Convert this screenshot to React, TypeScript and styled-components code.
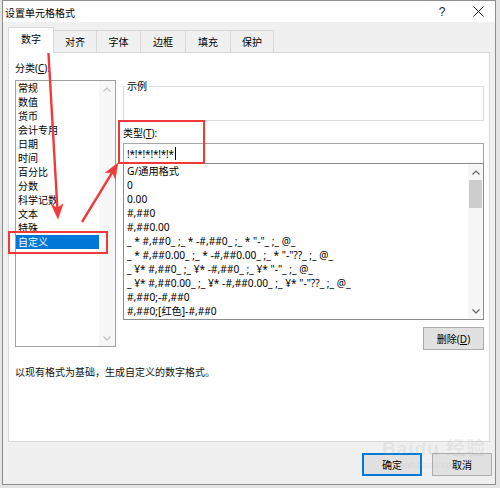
import styled, { createGlobalStyle } from "styled-components";

const GlobalStyle = createGlobalStyle`
  html, body {
    margin: 0;
    padding: 0;
  }
  body {
    width: 500px;
    height: 488px;
    overflow: hidden;
    background: #e4e4e4;
    font-family: "Noto Sans", "Noto Sans CJK SC", sans-serif;
    font-size: 10px;
    color: #000;
  }
`;

const Screen = styled.div`
  position: relative;
  width: 500px;
  height: 488px;
  padding-left: 2px;
  box-sizing: border-box;
`;

const Dialog = styled.div`
  width: 494px;
  height: 485px;
  box-sizing: border-box;
  border: 1px solid #8e8e8e;
  background: #f0f0f0;
  display: flex;
  flex-direction: column;
`;

const TitleBar = styled.div`
  height: 21px;
  background: #fff;
  display: flex;
  align-items: center;
  padding: 0 2px;
  gap: 6px;
`;

const Title = styled.span`
  flex: 1;
  padding-top: 2px;
  line-height: 14px;
`;

const TitleButton = styled.span`
  width: 30px;
  height: 21px;
  display: flex;
  align-items: center;
  justify-content: center;
  font-family: "Liberation Sans", sans-serif;
  font-size: 12px;
  color: #222;
`;

const Body = styled.div`
  flex: 1;
  display: flex;
  flex-direction: column;
  padding: 0 5px;
`;

const TabRow = styled.div`
  height: 30px;
  display: flex;
  align-items: flex-end;
`;

const Tab = styled.div<{ $active?: boolean; $w: number }>`
  position: relative;
  z-index: ${(p) => (p.$active ? 2 : 1)};
  width: ${(p) => p.$w}px;
  height: ${(p) => (p.$active ? 26 : 22)}px;
  margin-bottom: ${(p) => (p.$active ? -1 : 0)}px;
  margin-right: -1px;
  box-sizing: border-box;
  border: 1px solid #d9d9d9;
  border-bottom: none;
  background: ${(p) => (p.$active ? "#fff" : "#f0f0f0")};
  display: flex;
  align-items: center;
  justify-content: center;
  padding-bottom: ${(p) => (p.$active ? 4 : 0)}px;
  line-height: 14px;
`;

const Panel = styled.div`
  height: 390px;
  box-sizing: border-box;
  background: #fff;
  border: 1px solid #d9d9d9;
  padding: 8px 5px 0 6px;
  display: flex;
  flex-direction: column;
`;

const MainRow = styled.div`
  display: grid;
  grid-template-columns: 101px 1fr;
  column-gap: 7px;
  align-items: start;
`;

const Column = styled.div`
  display: flex;
  flex-direction: column;
`;

const Label = styled.div<{ $gap?: number; $top?: number }>`
  line-height: 14px;
  height: 14px;
  margin-top: ${(p) => p.$top ?? 0}px;
  margin-bottom: ${(p) => p.$gap ?? 0}px;
  white-space: nowrap;
`;

const Mnemonic = styled.span`
  text-decoration: underline;
  text-underline-offset: 1px;
`;

const ListBox = styled.div<{ $h: number; $border: string }>`
  height: ${(p) => p.$h}px;
  box-sizing: border-box;
  border: 1px solid ${(p) => p.$border};
  background: #fff;
  display: flex;
  overflow: hidden;
`;

const ListItems = styled.div<{ $pad: number; $size?: number }>`
  flex: 1;
  display: flex;
  flex-direction: column;
  padding-left: ${(p) => p.$pad}px;
  font-size: ${(p) => p.$size ?? 10}px;
`;

const Item = styled.div<{ $selected?: boolean }>`
  height: 14px;
  line-height: 14px;
  white-space: pre;
  margin-left: ${(p) => (p.$selected ? -2 : 0)}px;
  padding-left: ${(p) => (p.$selected ? 2 : 0)}px;
  background: ${(p) => (p.$selected ? "#0078d7" : "transparent")};
  color: ${(p) => (p.$selected ? "#fff" : "#000")};
`;

const ScrollBar = styled.div<{ $w: number }>`
  width: ${(p) => p.$w}px;
  background: #f7f7f7;
  display: flex;
  flex-direction: column;
  align-items: center;
`;

const ArrowBox = styled.div`
  height: 16px;
  width: 100%;
  display: flex;
  align-items: center;
  justify-content: center;
`;

const Track = styled.div`
  flex: 1;
  width: 100%;
  display: flex;
  flex-direction: column;
  align-items: center;
`;

const Thumb = styled.div`
  width: 13px;
  height: 28px;
  background: #cdcdcd;
`;

const SampleBox = styled.fieldset`
  margin: 18px 0 0;
  padding: 0;
  height: 42px;
  box-sizing: border-box;
  border: 1px solid #dcdcdc;
  min-width: 0;
`;

const Legend = styled.legend`
  padding: 0 2px;
  margin-left: 1px;
  line-height: 14px;
`;

const Input = styled.div`
  margin-top: 3px;
  height: 20px;
  box-sizing: border-box;
  border: 1px solid #a6a6a6;
  border-bottom: none;
  display: flex;
  align-items: center;
  padding-left: 3px;
  font-family: "Noto Sans", sans-serif;
  letter-spacing: -0.2px;
`;

const Caret = styled.span`
  display: inline-block;
  width: 1px;
  height: 13px;
  background: #000;
  margin-left: 1px;
`;

const Button = styled.div<{ $w: number; $focus?: boolean }>`
  width: ${(p) => p.$w}px;
  height: 23px;
  box-sizing: border-box;
  background: #e1e1e1;
  border: 1px solid ${(p) => (p.$focus ? "#0078d7" : "#adadad")};
  box-shadow: ${(p) => (p.$focus ? "inset 0 0 0 1px #0078d7" : "none")};
  display: flex;
  align-items: center;
  justify-content: center;
  line-height: 14px;
`;

const DeleteButton = styled(Button)`
  align-self: flex-end;
  margin-top: 7px;
`;

const Description = styled.div`
  margin-top: 15px;
  line-height: 14px;
  color: #111;
`;

const Footer = styled.div`
  margin-top: 11px;
  margin-right: -2px;
  display: flex;
  justify-content: flex-end;
  gap: 10px;
`;

const Overlay = styled.svg`
  position: absolute;
  left: 0;
  top: 0;
  pointer-events: none;
`;

const Watermark = styled.div`
  position: absolute;
  left: 382px;
  top: 438px;
  color: rgba(160, 160, 160, 0.16);
  font-family: "Liberation Sans", "Noto Sans CJK SC", sans-serif;
  pointer-events: none;
`;

const WatermarkBig = styled.div`
  font-size: 19px;
  font-weight: bold;
  line-height: 22px;
  letter-spacing: 1px;
`;

const WatermarkSmall = styled.div`
  font-size: 9px;
  line-height: 11px;
  padding-left: 4px;
`;

const categories = [
  "常规",
  "数值",
  "货币",
  "会计专用",
  "日期",
  "时间",
  "百分比",
  "分数",
  "科学记数",
  "文本",
  "特殊",
  "自定义",
];

const formats = [
  "G/通用格式",
  "0",
  "0.00",
  "#,##0",
  "#,##0.00",
  '_ * #,##0_ ;_ * -#,##0_ ;_ * "-"_ ;_ @_',
  '_ * #,##0.00_ ;_ * -#,##0.00_ ;_ * "-"??_ ;_ @_',
  '_ ¥* #,##0_ ;_ ¥* -#,##0_ ;_ ¥* "-"_ ;_ @_',
  '_ ¥* #,##0.00_ ;_ ¥* -#,##0.00_ ;_ ¥* "-"??_ ;_ @_',
  "#,##0;-#,##0",
  "#,##0;[红色]-#,##0",
];

const tabs = [
  { label: "数字", w: 46 },
  { label: "对齐", w: 44 },
  { label: "字体", w: 45 },
  { label: "边框", w: 46 },
  { label: "填充", w: 46 },
  { label: "保护", w: 44 },
];

function Chevron({ up, color }: { up?: boolean; color: string }) {
  return (
    <svg width="8" height="5" viewBox="0 0 8 5">
      <path
        d={up ? "M0.5 4.5 L4 1 L7.5 4.5" : "M0.5 0.5 L4 4 L7.5 0.5"}
        fill="none"
        stroke={color}
        strokeWidth="1.2"
      />
    </svg>
  );
}

function Arrow({ x1, y1, x2, y2 }: { x1: number; y1: number; x2: number; y2: number }) {
  const dx = x2 - x1;
  const dy = y2 - y1;
  const len = Math.sqrt(dx * dx + dy * dy);
  const ux = dx / len;
  const uy = dy / len;
  const hl = 15;
  const hw = 6;
  const bx = x2 - ux * hl;
  const by = y2 - uy * hl;
  const pts = `${x2},${y2} ${bx - uy * hw},${by + ux * hw} ${bx + ux * 3 - uy * 1.5},${by + uy * 3 + ux * 1.5} ${bx + ux * 3 + uy * 1.5},${by + uy * 3 - ux * 1.5} ${bx + uy * hw},${by - ux * hw}`;
  return (
    <g fill="#f03a3a" stroke="#f03a3a">
      <line x1={x1} y1={y1} x2={bx + ux * 4} y2={by + uy * 4} strokeWidth="2.4" />
      <polygon points={pts} strokeWidth="0.5" />
    </g>
  );
}

export default function App() {
  return (
    <>
      <GlobalStyle />
      <Screen>
        <Dialog>
          <TitleBar>
            <Title>设置单元格格式</Title>
            <TitleButton>?</TitleButton>
            <TitleButton>
              <svg width="11" height="11" viewBox="0 0 11 11">
                <path d="M0.5 0.5 L10.5 10.5 M10.5 0.5 L0.5 10.5" stroke="#222" strokeWidth="1" />
              </svg>
            </TitleButton>
          </TitleBar>
          <Body>
            <TabRow>
              {tabs.map((t, i) => (
                <Tab key={t.label} $w={t.w} $active={i === 0}>
                  {t.label}
                </Tab>
              ))}
            </TabRow>
            <Panel>
              <MainRow>
                <Column>
                  <Label $gap={5}>
                    分类(<Mnemonic>C</Mnemonic>):
                  </Label>
                  <ListBox $h={267} $border="#a0a0a0">
                    <ListItems $pad={2}>
                      {categories.map((c) => (
                        <Item key={c} $selected={c === "自定义"}>
                          {c}
                        </Item>
                      ))}
                    </ListItems>
                    <ScrollBar $w={16}>
                      <ArrowBox>
                        <Chevron up color="#c2c2c2" />
                      </ArrowBox>
                      <Track />
                      <ArrowBox>
                        <Chevron color="#c2c2c2" />
                      </ArrowBox>
                    </ScrollBar>
                  </ListBox>
                </Column>
                <Column>
                  <SampleBox>
                    <Legend>示例</Legend>
                  </SampleBox>
                  <Label $top={5}>
                    类型(<Mnemonic>T</Mnemonic>):
                  </Label>
                  <Input>
                    !*!*!*!*!*!*
                    <Caret />
                  </Input>
                  <ListBox $h={157} $border="#8c8c8c">
                    <ListItems $pad={3} $size={10.2}>
                      {formats.map((f) => (
                        <Item key={f}>{f}</Item>
                      ))}
                    </ListItems>
                    <ScrollBar $w={15}>
                      <ArrowBox>
                        <Chevron up color="#606060" />
                      </ArrowBox>
                      <Track>
                        <Thumb />
                      </Track>
                      <ArrowBox>
                        <Chevron color="#606060" />
                      </ArrowBox>
                    </ScrollBar>
                  </ListBox>
                  <DeleteButton $w={61}>
                    删除(<Mnemonic>D</Mnemonic>)
                  </DeleteButton>
                </Column>
              </MainRow>
              <Description>以现有格式为基础，生成自定义的数字格式。</Description>
            </Panel>
            <Footer>
              <Button $w={60} $focus>
                确定
              </Button>
              <Button $w={60}>取消</Button>
            </Footer>
          </Body>
        </Dialog>
        <Watermark>
          <WatermarkBig>Baidu 经验</WatermarkBig>
          <WatermarkSmall>jingyan.baidu.com</WatermarkSmall>
        </Watermark>
        <Overlay width="500" height="488" viewBox="0 0 500 488">
          <ellipse
            cx="33"
            cy="36"
            rx="19"
            ry="7.5"
            fill="none"
            stroke="#f03a3a"
            strokeWidth="2"
            transform="rotate(-7 33 36)"
          />
          <Arrow x1={48} y1={45} x2={58} y2={219} />
          <Arrow x1={82} y1={222} x2={118} y2={163} />
          <rect x="9" y="232" width="98" height="21" fill="none" stroke="#f03a3a" strokeWidth="2" />
          <rect x="119" y="121" width="85" height="42" fill="none" stroke="#f03a3a" strokeWidth="2" />
        </Overlay>
      </Screen>
    </>
  );
}
